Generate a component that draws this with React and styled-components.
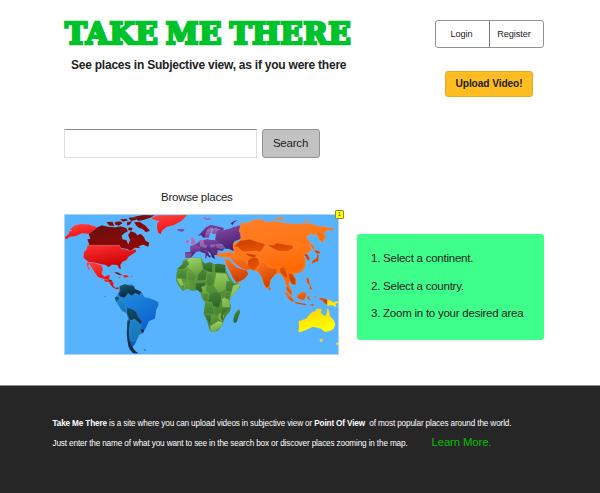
import React from "react";
import styled, { createGlobalStyle } from "styled-components";

const GlobalStyle = createGlobalStyle`
  * { box-sizing: border-box; }
  body { margin: 0; background: #fff; font-family: "Liberation Sans", Arial, sans-serif; color: #222; }
  p, h1, h2, ol { margin: 0; padding: 0; font-weight: normal; }
  button, input { font-family: inherit; color: inherit; margin: 0; }
`;

const Page = styled.div`
  width: 600px;
  height: 493px;
  display: flex;
  flex-direction: column;
  overflow: hidden;
`;

const Header = styled.header`
  display: flex;
  justify-content: space-between;
  height: 129px;
  padding: 20px 56px 0 64px;
`;

const Title = styled.h1`
  padding-left: 1px;
  font: bold 29.5px/28px "DejaVu Serif", serif;
  letter-spacing: 0.45px;
  word-spacing: -3px;
  color: #00c22b;
  -webkit-text-stroke: 2.6px #00c22b;
  stroke-linejoin: round;
  white-space: nowrap;
`;

const Tagline = styled.p`
  margin: 10px 0 0 7px;
  font-size: 12px;
  line-height: 14px;
  letter-spacing: -0.23px;
  font-weight: bold;
  white-space: nowrap;
`;

const Actions = styled.div`
  width: 109px;
  display: flex;
  flex-direction: column;
  align-items: flex-start;
`;

const AccountBar = styled.div`
  width: 109px;
  height: 28px;
  display: flex;
  border: 1px solid #929292;
  border-radius: 3px;
`;

const AccountButton = styled.button`
  width: ${(p) => p.$width}px;
  padding: 0 2px 1px 0;
  border: 0;
  border-right: ${(p) => (p.$divider ? "1px solid #777" : "0")};
  background: none;
  font-size: 9.2px;
  letter-spacing: -0.12px;
`;

const UploadButton = styled.button`
  width: 88px;
  height: 26px;
  margin: 23px 0 0 10px;
  padding: 0 0 1px;
  border: 1px solid #e9a72a;
  border-radius: 3px;
  background: #ffbd22;
  font-size: 10.2px;
  letter-spacing: -0.1px;
  font-weight: bold;
  white-space: nowrap;
`;

const SearchForm = styled.form`
  display: flex;
  gap: 5px;
  height: 29px;
  margin-left: 64px;
`;

const SearchInput = styled.input`
  width: 193px;
  border: 1px solid #ddd;
  border-top-color: #888;
  background: #fff;
`;

const SearchButton = styled.button`
  width: 58px;
  padding: 0 1px 2px 0;
  border: 1px solid #949494;
  border-radius: 3px;
  background: #c2c2c2;
  font-size: 11.5px;
  letter-spacing: -0.2px;
`;

const Browse = styled.main`
  display: flex;
  gap: 18px;
  height: 227px;
  padding: 32px 0 0 64px;
`;

const MapColumn = styled.section`
  width: 275px;
`;

const Caption = styled.h2`
  height: 24px;
  padding-left: 97px;
  font-size: 11.5px;
  letter-spacing: -0.25px;
  line-height: 14px;
`;

const MapFrame = styled.div`
  position: relative;
  width: 275px;
  height: 141px;

  svg { display: block; }
`;

const Note = styled.span`
  position: absolute;
  top: -4px;
  right: -5px;
  width: 9px;
  height: 9px;
  border: 1px solid #8b8b35;
  border-radius: 1px;
  background: #ff0;
  color: #333;
  font-size: 5px;
  line-height: 6px;
  text-align: center;
`;

const Steps = styled.ol`
  width: 187px;
  height: 106px;
  margin-top: 44px;
  padding: 10px 0 0 14px;
  border-radius: 3px;
  background: #3fff8b;
  list-style: none;
`;

const Step = styled.li`
  height: 27.5px;
  font-size: 11.5px;
  letter-spacing: -0.24px;
  line-height: 28px;
  white-space: nowrap;
`;

const Footer = styled.footer`
  flex: 1;
  padding: 28px 52.5px;
  border-top: 1px solid #8a8a8a;
  background: #262626;
  color: #fff;
  font-size: 8.2px;
  letter-spacing: -0.145px;
`;

const FooterLine = styled.p`
  display: flex;
  align-items: baseline;
  gap: 24px;
  height: 20px;
  line-height: 20px;
  white-space: pre;
`;

const LearnMore = styled.a`
  color: #00c000;
  font-size: 11.4px;
  letter-spacing: -0.15px;
  line-height: 17px;
`;

const gradients = {
  crimson: ["#66100e", "#8f0805"],
  red: ["#ff3030", "#c90000"],
  scarlet: ["#ff4242", "#ee1111"],
  blue: ["#2599e1", "#0652ca"],
  sea: ["#1687cb", "#1876b5"],
  navy: ["#17597b", "#092a3d"],
  purple: ["#8a4bad", "#47206b"],
  violet: ["#b782c8", "#6f3e98"],
  orange: ["#ff812c", "#ff6900"],
  rust: ["#ff751e", "#cc4000"],
  ember: ["#c93d00", "#e85300"],
  leaf: ["#a4d873", "#6ba63c"],
  green: ["#54983c", "#2d6427"],
  grass: ["#669f3a", "#498431"],
  yellow: ["#ffcd00", "#ffff00"],
};

const americas = [
  ["scarlet", "M12,98L24,89 28,83 24,80 36,77 30,73 45,61 60,57 85,58 112,67 88,87 66,85 48,93 31,95 20,102Z"],
  ["crimson", "M86,88L112,67 125,61 145,65 168,67 181,64 199,69 204,79 193,85 185,92 188,103 199,105 205,118 210,105 204,90 212,79 226,83 232,91 242,86 252,96 257,107 268,113 265,126 250,119 236,124 241,130 225,128 211,139 202,132 183,130 178,121 88,121 82,103 91,101Z"],
  ["crimson", "M139,51L158,50 163,63 148,62ZM164,51L181,49 188,55 176,62 166,59ZM180,43L198,41 205,46 189,50ZM201,51L217,49 209,59 201,62ZM205,38L225,36 231,44 213,48ZM222,35L250,30 285,31 270,39 248,46 235,48ZM222,52L239,50 257,62 270,77 258,82 247,72 237,69 229,62ZM206,67L219,69 214,77 204,76Z"],
  ["red", "M83,121L178,121 184,131 202,134 210,139 226,132 229,140 214,150 206,155 200,165 187,171 181,180 183,193 177,190 172,180 155,179 146,187 137,180 119,177 108,174 86,171 75,163 70,157 72,141 79,134Z"],
  ["scarlet", "M80,171L91,173 101,173 112,177 123,180 129,191 125,206 133,215 143,211 150,210 147,221 142,225 132,222 115,217 107,207 96,190 88,177 84,182 91,197 86,194 80,181Z"],
  ["red", "M130,223L141,225 151,226 160,231 160,242 167,249 174,246 177,253 169,252 160,248 151,239 147,231 136,230ZM189,210L201,210 207,216 192,218ZM174,217L182,216 179,220ZM212,213L218,214 216,217Z"],
  ["crimson", "M162,202L173,202 190,212 176,209 169,206ZM144,222L156,226 154,231 145,226Z"],
  ["blue", "M177,246L192,238 219,238 223,253 233,256 246,262 253,276 271,280 295,290 296,301 289,314 285,341 267,349 258,369 247,386 238,389 232,402 225,418 218,426 226,440 238,446 221,446 208,434 201,402 202,365 204,342 200,326 185,318 174,300 165,287 168,273 175,267Z"],
  ["navy", "M178,244L194,237 207,241 221,242 226,252 244,260 239,270 225,264 215,272 204,265 194,278 181,275 174,267 181,258Z"],
  ["sea", "M168,285L180,285 188,293 199,294 195,308 204,325 195,321 184,314 174,298Z"],
  ["navy", "M164,277L174,274 179,281 169,291ZM201,308L216,312 229,321 235,337 245,348 243,360 230,350 224,342 210,347 201,326ZM202,346L211,346 207,372 207,399 213,417 222,434 234,444 218,444 205,424 200,388ZM242,371L253,374 250,384 241,381Z"],
  ["sea", "M211,348L224,342 233,350 244,360 240,374 246,384 236,390 232,403 221,411 213,407 208,388Z"],
  ["navy", "M132,273L137,274 136,277ZM250,434L257,433 256,437Z"],
  ["scarlet", "M274,39L291,31 382,30 371,41 363,49 341,61 321,65 306,77 302,88 294,83 291,70 291,56 297,48 276,43Z"],
];

const europe = [
  ["violet", "M81,73L91,71 105,73 98,80 86,79ZM155,38L166,36 168,39 185,39 178,46 167,44Z"],
  ["purple", "M241,55L252,47 266,44 254,52 247,61Z"],
  ["purple", "M143,93L154,82 168,66 182,59 200,63 222,69 219,78 205,72 195,76 188,69 179,75 169,85 169,97 160,98 153,91Z"],
  ["violet", "M172,75L184,68 185,77 180,87 176,99 168,98 166,88ZM188,72L201,68 202,85 190,88 184,84Z"],
  ["purple", "M198,85L204,73 217,76 238,71 250,66 270,61 275,76 271,92 277,99 264,105 254,109 249,118 257,131 251,139 237,132 225,131 217,119 204,115 195,105Z"],
  ["purple", "M105,142L121,141 120,123 132,119 143,113 151,104 162,105 172,102 182,105 196,104 210,117 226,128 217,138 203,136 203,146 208,153 199,150 192,151 196,161 186,158 182,146 177,142 173,139 177,148 168,156 165,145 157,143 149,139 138,142 130,150 123,158 106,158Z"],
  ["violet", "M121,100L128,94 135,107 138,116 123,118 124,109ZM107,107L117,103 117,113 106,116ZM149,107L159,105 162,118 172,122 167,129 151,124ZM196,118L211,117 225,129 213,132 200,127ZM107,147L125,145 121,156 106,157ZM180,120L193,117 195,125 182,127ZM165,152L173,158 165,160Z"],
  ["purple", "M122,123L140,122 150,128 145,139 133,141 122,134ZM186,139L202,137 201,147 190,147ZM163,136L171,138 178,151 185,153 178,158 171,149Z"],
];

const asia = [
  ["orange", "M-15,65L-9,51 2,55 20,47 38,41 54,45 63,51 90,48 113,53 151,57 194,55 220,63 265,69 265,77 249,75 236,84 244,94 234,112 222,103 218,91 198,88 184,93 194,111 197,124 201,140 192,136 187,143 176,149 181,164 181,185 169,201 157,205 145,205 151,219 155,235 145,240 139,235 133,229 131,240 141,258 142,268 133,264 125,247 121,229 113,216 105,205 98,205 87,213 78,223 74,242 69,250 61,248 54,232 48,210 40,201 27,196 10,193 -5,185 -23,181 -38,165 -45,158 -81,155 -85,146 -60,143 -47,139 -31,146 -36,128 -35,115 -15,107 -12,91 -18,79Z"],
  ["rust", "M-62,162L-49,163 -43,171 -23,188 -8,193 5,196 10,208 -2,222 -25,234 -37,218 -46,198 -56,180Z"],
  ["ember", "M-15,107L2,105 15,103 38,111 60,117 54,130 45,141 33,137 16,144 -7,139 -23,126 -34,125Z"],
  ["orange", "M0,140L29,137 44,146 51,139 66,123 91,137 119,142 137,136 150,108 166,119 177,117 193,119 197,135 189,143 174,149 182,170 173,193 153,205 133,201 120,193 107,186 84,190 66,179 51,164 38,158 22,160Z"],
  ["ember", "M68,119L86,121 95,114 122,119 145,122 143,131 127,139 102,139 83,130Z"],
  ["rust", "M45,173L58,173 70,187 85,191 96,190 94,204 85,214 76,226 73,243 66,248 58,239 50,215 42,205 37,195Z"],
  ["rust", "M-45,155L-36,152 -27,162 -12,160 6,171 15,193 5,195 -10,190 -24,181 -37,169ZM103,191L116,184 124,199 128,220 118,215 106,202ZM129,205L141,207 151,221 152,239 141,238 133,222Z"],
  ["ember", "M10,164L24,157 39,160 43,176 37,186 26,197 14,190 8,179ZM0,145L20,147 35,151 28,159 12,154Z"],
  ["ember", "M175,149L185,146 194,158 193,168 184,162 181,153ZM209,135L222,138 227,145 216,146 211,142ZM216,147L221,151 220,168 210,172 200,176 203,166 211,163 216,157ZM72,246L77,249 74,257 70,254ZM184,217L192,221 194,235 200,248 204,254 193,252 195,242 185,232ZM122,245L130,248 139,260 142,272 137,269 127,258Z"],
  ["rust", "M116,258L126,263 139,276 149,289 142,290 130,281ZM150,290L164,293 184,297 183,301 159,297 149,294ZM158,270L175,259 184,265 182,277 176,285 164,283 156,278ZM186,275L197,270 192,277 198,289 187,280 186,291ZM195,299L208,297 203,304ZM219,281L228,278 247,283 247,300 237,293 231,286ZM206,273L214,275 211,280Z"],
  ["orange", "M89,39L107,37 120,43 101,45ZM173,45L195,48 187,52ZM194,110L209,127 208,137 199,124ZM213,84L232,82 238,97 232,113 222,103 218,94Z"],
  ["yellow", "M247,283L259,287 272,299 275,307 262,301 256,301 247,303ZM263,293L276,289 281,286 282,291 270,298Z"],
  ["yellow", "M161,349L173,345 185,340 193,329 201,321 211,319 215,311 230,312 228,325 241,334 245,324 247,309 252,317 255,334 266,345 271,358 266,371 255,378 240,381 228,371 220,369 204,365 185,374 165,382 160,379 162,368Z"],
  ["yellow", "M224,402L235,402 230,410 225,409ZM273,415L282,411 285,415 276,420Z"],
];

const africaOutline = "M99,166L109,163 124,158 154,158 157,167 165,176 180,171 193,178 207,176 225,180 228,195 240,219 253,235 273,234 270,245 255,264 241,279 239,291 243,306 240,319 228,333 220,348 217,363 202,378 183,381 178,373 172,350 161,327 164,307 165,292 156,280 152,264 143,255 128,258 111,251 98,259 85,241 78,227 80,205 84,190 98,177Z";

const africa = [
  ["grass", "M78,186L113,191 109,225 79,221Z"],
  ["leaf", "M101,178L117,159 151,157 157,191 141,210Z"],
  ["green", "M98,168L111,164 118,178 102,192 81,195 87,184ZM155,169L188,172 187,203 160,194ZM194,174L228,178 226,204 195,202Z"],
  ["grass", "M114,196L140,211 134,230 111,225ZM171,202L191,206 193,231 180,246 168,235Z"],
  ["green", "M142,209L158,193 171,201 168,225 143,227ZM82,195L107,192 110,222 79,219ZM137,235L167,232 164,253 151,263 136,253Z"],
  ["leaf", "M199,205L229,207 238,228 226,254 207,262 192,243ZM81,222L93,221 101,239 92,242ZM154,246L169,241 167,257 177,268 160,265Z"],
  ["green", "M229,228L246,229 263,244 245,263 226,256ZM178,267L195,258 212,263 214,286 206,309 190,304 181,291 173,292Z"],
  ["leaf", "M249,242L276,232 259,262 240,281ZM216,283L224,277 239,287 239,306 218,309ZM205,329L217,320 222,332 217,349 206,342Z"],
  ["grass", "M102,235L116,231 119,258 104,250ZM226,260L244,261 237,285 223,277ZM158,267L176,264 173,292 158,282Z"],
  ["green", "M162,292L186,291 192,325 161,327ZM214,307L243,307 219,330 222,353 212,339ZM163,328L184,331 181,363 174,350Z"],
  ["grass", "M185,331L198,329 207,345 195,358 184,351Z"],
  ["leaf", "M181,364L205,349 216,351 220,362 191,382 182,380Z"],
];

const Region = styled.path`
  stroke: ${(p) => p.$line};
  stroke-width: 1;
  stroke-linejoin: round;
`;

function Regions({ shapes, line = "#ffffff38" }) {
  return shapes.map(([tone, d], i) => (
    <Region key={i} d={d} fill={`url(#${tone})`} $line={line} />
  ));
}

function WorldMap() {
  return (
    <svg width="275" height="141" viewBox="12 27 825 423" role="img" aria-label="World map">
      <defs>
        {Object.entries(gradients).map(([name, [from, to]]) => (
          <linearGradient key={name} id={name} x1="0" y1="0" x2="0.35" y2="1">
            <stop stopColor={from} />
            <stop offset="1" stopColor={to} />
          </linearGradient>
        ))}
        <clipPath id="africa"><path d={africaOutline} /></clipPath>
      </defs>
      <rect x="12" y="27" width="825" height="423" fill="#57b3fe" />
      <Regions shapes={americas} />
      <g transform="translate(270 0)">
        <Regions shapes={europe} />
        <path d={africaOutline} fill="url(#grass)" />
        <g clipPath="url(#africa)"><Regions shapes={africa} line="#a8cf8077" /></g>
        <path d="M267,312L271,321 266,333 260,352 251,353 250,341 255,325Z" fill="url(#green)" />
      </g>
      <g transform="translate(555 0)"><Regions shapes={asia} line="#ffb06a66" /></g>
      <path d="M13,449V28H836V449Z" fill="none" stroke="#bedcf0" strokeWidth="3" />
    </svg>
  );
}

export default function App() {
  return (
    <Page>
      <GlobalStyle />
      <Header>
        <div>
          <Title>TAKE ME THERE</Title>
          <Tagline>See places in Subjective view, as if you were there</Tagline>
        </div>
        <Actions>
          <AccountBar>
            <AccountButton $width={54} $divider>Login</AccountButton>
            <AccountButton $width={50}>Register</AccountButton>
          </AccountBar>
          <UploadButton>Upload Video!</UploadButton>
        </Actions>
      </Header>
      <SearchForm onSubmit={(e) => e.preventDefault()}>
        <SearchInput aria-label="Search places" />
        <SearchButton>Search</SearchButton>
      </SearchForm>
      <Browse>
        <MapColumn>
          <Caption>Browse places</Caption>
          <MapFrame>
            <WorldMap />
            <Note>1</Note>
          </MapFrame>
        </MapColumn>
        <Steps>
          <Step>1. Select a continent.</Step>
          <Step>2. Select a country.</Step>
          <Step>3. Zoom in to your desired area</Step>
        </Steps>
      </Browse>
      <Footer>
        <FooterLine>
          <span><b>Take Me There</b> is a site where you can upload videos in subjective view or <b>Point Of View</b>{"  of most popular places around the world."}</span>
        </FooterLine>
        <FooterLine>
          <span>Just enter the name of what you want to see in the search box or discover places zooming in the map.</span>
          <LearnMore>Learn More.</LearnMore>
        </FooterLine>
      </Footer>
    </Page>
  );
}
